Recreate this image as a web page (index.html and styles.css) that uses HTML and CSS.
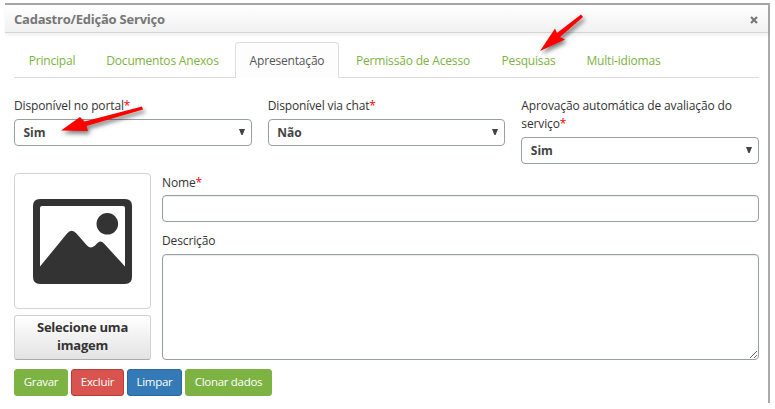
FILE: index.html
```html
<!DOCTYPE html>
<html lang="pt-BR">
<head>
<meta charset="utf-8">
<title>Cadastro/Edição Serviço</title>
<link rel="stylesheet" href="styles.css">
</head>
<body>
<main class="dialog">
  <header class="titlebar">
    <h1>Cadastro/Edição Serviço</h1>
    <svg class="close" viewBox="0 0 8 8"><path d="M1 1L7 7M7 1L1 7"/></svg>
  </header>
  <div class="content">
    <nav class="tabs">
      <a class="tab t1">Principal</a>
      <a class="tab t2">Documentos Anexos</a>
      <a class="tab t3 active">Apresentação</a>
      <a class="tab t4">Permissão de Acesso</a>
      <a class="tab t5">Pesquisas</a>
      <a class="tab t6">Multi-idiomas</a>
    </nav>
    <section class="selects">
      <div class="field">
        <label>Disponível no portal<i>*</i></label>
        <div class="select"><span>Sim</span><svg viewBox="0 0 6 6"><path d="M0 0H6L3.6 6H2.4Z"/></svg></div>
      </div>
      <div class="field">
        <label>Disponível via chat<i>*</i></label>
        <div class="select"><span>Não</span><svg viewBox="0 0 6 6"><path d="M0 0H6L3.6 6H2.4Z"/></svg></div>
      </div>
      <div class="field">
        <label>Aprovação automática de avaliação do<br>serviço<i>*</i></label>
        <div class="select"><span>Sim</span><svg viewBox="0 0 6 6"><path d="M0 0H6L3.6 6H2.4Z"/></svg></div>
      </div>
    </section>
    <section class="details">
      <div class="picture">
        <div class="preview">
          <svg viewBox="0 0 99 85"><path fill-rule="evenodd" d="M7 0H92Q99 0 99 7V78Q99 85 92 85H7Q0 85 0 78V7Q0 0 7 0ZM9 7Q7 7 7 9V67.500L34 34.500Q38.500 29 43.500 34.500L54 46.500Q57.500 50 61.500 47L64 44.500Q67.500 40.500 71 44.500L92 67.500V9Q92 7 90 7Z"/><circle cx="74.300" cy="24.800" r="10.800"/></svg>
        </div>
        <button class="choose">Selecione uma<br>imagem</button>
      </div>
      <div class="inputs">
        <label>Nome<i>*</i></label>
        <input class="box name" type="text">
        <label class="desc">Descrição</label>
        <textarea class="box"></textarea>
      </div>
    </section>
    <footer class="actions">
      <button class="green b1">Gravar</button>
      <button class="red b2">Excluir</button>
      <button class="blue b3">Limpar</button>
      <button class="green b4">Clonar dados</button>
    </footer>
  </div>
</main>
<svg class="arrows" viewBox="0 0 775 409">
  <path d="M142 106.500L84.500 121.500L80 117L61 130.500L88 131L86.500 126L143 109.500Z"/>
  <path d="M581 14.500L557 33L555 28.500L540 51L565 39.500L560 37L583 17Z"/>
</svg>
</body>
</html>
```
FILE: styles.css
```css
* { box-sizing: border-box; }
body {
  margin: 0;
  padding: 3px 5px 6px;
  height: 409px;
  overflow: hidden;
  background: #fff;
  font: 12px/18px "Open Sans", sans-serif;
  color: #333;
}
.dialog {
  height: 400px;
  border-top: 2px solid #a6a6a6;
  border-right: 2px solid #aaa;
}
.titlebar {
  height: 28px;
  padding: 0 10px 0 9px;
  display: flex;
  align-items: center;
  justify-content: space-between;
  border-bottom: 1px solid #d5d5d5;
  background: linear-gradient(#fff, #f1f1f1);
  box-shadow: 1px 2px 4px rgba(0, 0, 0, .07);
}
h1 { margin: 0; font-size: 13px; line-height: 18px; letter-spacing: -.22px; color: #777; }
.close { width: 8px; height: 8px; margin-top: 3px; fill: none; stroke: #777; stroke-width: 2.2; }
.content { padding: 9px 9px 0; }
.tabs { display: flex; height: 36px; width: 745px; border-bottom: 1px solid #ddd; }
.tab {
  height: 36px;
  padding: 9px 0 0;
  text-align: center;
  white-space: nowrap;
  letter-spacing: -.18px;
  color: #7cb342;
  border: 1px solid transparent;
  border-bottom: 0;
}
.t1 { width: 76px; }
.t2 { width: 145px; }
.t3 { width: 104px; }
.t4 { width: 148px; }
.t5 { width: 83px; }
.t6 { width: 107px; }
.active { color: #555; background: #fdfdfd; border-color: #ddd; border-radius: 4px 4px 0 0; }
.selects { display: flex; gap: 16px; width: 745px; margin-top: 19px; }
.field { flex: 1; }
label { display: block; white-space: nowrap; letter-spacing: -.13px; }
i { color: #f00; font-style: normal; }
.select {
  height: 27px;
  margin-top: 4px;
  padding: 0 6px 0 8.5px;
  display: flex;
  align-items: center;
  justify-content: space-between;
  border: 1px solid #95a09f;
  border-radius: 4px;
  background: #fff;
  font-weight: 700;
  color: #444;
}
.select svg { width: 6px; height: 6px; fill: #444; margin-bottom: 1px; }
.details { display: flex; gap: 11px; width: 745px; margin-top: 9px; }
.picture { width: 137px; }
.preview {
  height: 136px;
  padding-top: 1px;
  display: flex;
  align-items: center;
  justify-content: center;
  border: 1px solid #d3d3d3;
  border-radius: 4px;
}
.preview svg { width: 99px; height: 85px; fill: #333; }
.choose {
  display: block;
  width: 137px;
  height: 45px;
  margin-top: 6px;
  padding: 0 0 3px;
  border: 1px solid #d2d2d2;
  border-bottom-color: #aaa;
  border-radius: 3px;
  background: linear-gradient(#fff, #e3e3e3);
  font: 700 13px/18px "Open Sans", sans-serif;
  letter-spacing: -.22px;
  color: #333;
}
.inputs { flex: 1; }
.inputs label { padding-top: 1px; }
.box {
  display: block;
  width: 597px;
  margin: 0;
  border: 1px solid #95a09f;
  border-radius: 4px;
  background: #fff;
  box-shadow: inset 0 1px 1px rgba(0, 0, 0, .08);
}
.name { height: 27px; margin-top: 3px; }
.inputs .desc { padding-top: 10px; }
textarea { height: 106px; resize: both; }
textarea.box { margin-top: 4px; }
.actions { display: flex; gap: 3px; margin-top: 9px; }
.actions button {
  height: 27px;
  padding: 0 0 1px;
  border: 1px solid;
  border-radius: 3px;
  font: 11.5px/18px "Open Sans", sans-serif;
  letter-spacing: -.3px;
  color: #fff;
}
.actions .green { background: #7cb342; border-color: #7cb342; }
.actions .red { background: #d9534f; border-color: #b93c38; }
.actions .blue { background: #337ab7; border-color: #2868a0; }
.b1 { width: 54px; }
.b2 { width: 53px; }
.b3 { width: 55px; }
.b4 { width: 87px; }
.arrows {
  position: absolute;
  left: 0;
  top: 0;
  width: 775px;
  height: 409px;
  pointer-events: none;
  fill: #f00;
  filter: drop-shadow(2px 3px 2px rgba(0, 0, 0, .5));
}
```
